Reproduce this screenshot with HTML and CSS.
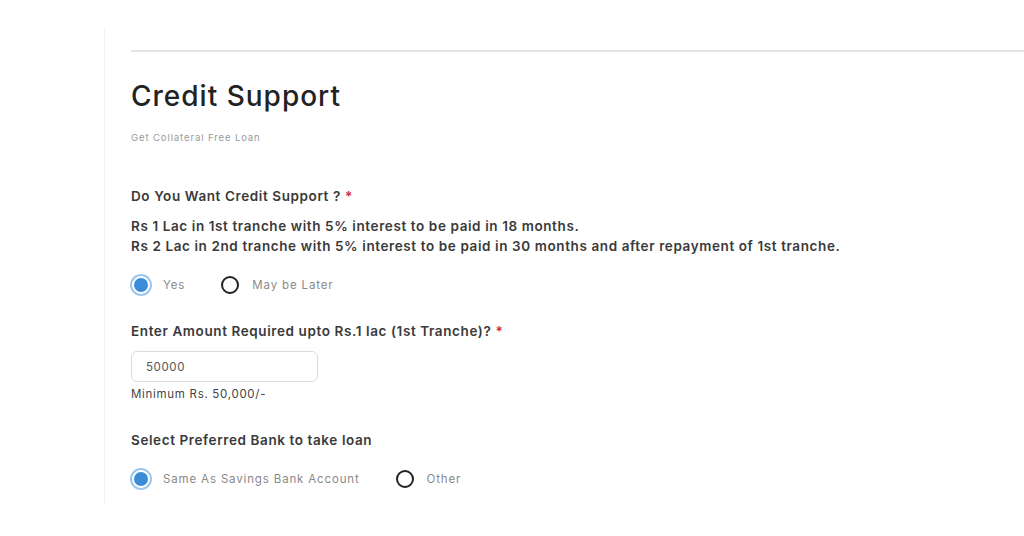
FILE: index.html
```html
<!DOCTYPE html>
<html>
<head>
<meta charset="utf-8">
<link rel="stylesheet" href="styles.css">
</head>
<body>
<div class="page">
  <div class="panel">
    <hr class="rule">
    <h1 class="title">Credit Support</h1>
    <p class="subtitle">Get Collateral Free Loan</p>

    <div class="field first">
      <div class="label">Do You Want Credit Support ? <span class="req">*</span></div>
      <p class="info">Rs 1 Lac in 1st tranche with 5% interest to be paid in 18 months.<br>Rs 2 Lac in 2nd tranche with 5% interest to be paid in 30 months and after repayment of 1st tranche.</p>
      <div class="radios">
        <label class="radio"><span class="dot checked"></span><span class="rtext">Yes</span></label>
        <label class="radio"><span class="dot"></span><span class="rtext">May be Later</span></label>
      </div>
    </div>

    <div class="field second">
      <div class="label">Enter Amount Required upto Rs.1 lac (1st Tranche)? <span class="req">*</span></div>
      <div class="input">50000</div>
      <div class="hint">Minimum Rs. 50,000/-</div>
    </div>

    <div class="field third">
      <div class="label">Select Preferred Bank to take loan</div>
      <div class="radios">
        <label class="radio"><span class="dot checked"></span><span class="rtext">Same As Savings Bank Account</span></label>
        <label class="radio"><span class="dot"></span><span class="rtext">Other</span></label>
      </div>
    </div>
  </div>
</div>
</body>
</html>
```
FILE: styles.css
```css
* { box-sizing: border-box; }
html, body { margin: 0; padding: 0; background: #fff; }
body { font-family: "Inter", "Noto Sans", sans-serif; color: #333; }
.page { width: 1024px; height: 536px; overflow: hidden; padding: 28px 0 0 104px; }
.panel {
  border-left: 1px solid #f3f3f3;
  height: 475px;
  padding: 22px 0 0 26px;
}
.rule { margin: 0; border: 0; height: 2px; background: #e4e4e4; }
.title {
  margin: 27px 0 0 0;
  font-size: 28px;
  line-height: 34px;
  font-weight: 500;
  color: #222;
  letter-spacing: 1px;
}
.subtitle { margin: 19px 0 0 0; font-size: 9.5px; line-height: 12px; color: #9a9a9a; letter-spacing: 0.9px; }
.field.first { margin-top: 44px; }
.field.second { margin-top: 29px; }
.field.third { margin-top: 31px; }
.label { font-size: 13.5px; font-weight: 600; line-height: 16px; color: #3a3a3a; letter-spacing: 0.6px; }
.req { color: #d0243b; }
.info { margin: 12px 0 0 0; font-size: 13.5px; font-weight: 600; line-height: 20px; color: #3a3a3a; letter-spacing: 0.6px; }
.radios { display: flex; gap: 36px; margin-top: 20px; align-items: center; padding-left: 1px; }
.field.third .radios { margin-top: 22px; }
.radio { display: flex; align-items: center; gap: 13px; }
.dot {
  width: 18px; height: 18px; border-radius: 50%;
  border: 2px solid #222; background: #fff;
  box-sizing: border-box;
}
.dot.checked {
  border: 2px solid #fff;
  background: #3a8bd8;
  box-shadow: 0 0 0 2px #9cc7ee;
}
.rtext { font-size: 11.5px; color: #8a8a8a; letter-spacing: 0.85px; }
.input {
  margin-top: 12px;
  width: 187px; height: 31px;
  border: 1px solid #dcdcdc; border-radius: 6px;
  padding: 0 14px;
  display: flex; align-items: center;
  font-size: 11.5px; color: #555; letter-spacing: 0.6px;
}
.hint { margin-top: 5px; font-size: 11.5px; line-height: 14px; color: #444; letter-spacing: 0.7px; }
```
